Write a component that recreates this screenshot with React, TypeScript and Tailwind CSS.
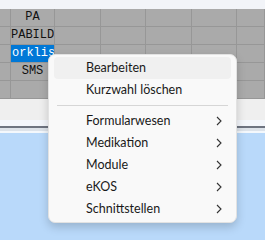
const rows = [
  ["", "PA", "", "", "", "", ""],
  ["", "PABILD", "", "", "", "", ""],
  ["", "orklis", "", "", "", "", ""],
  ["", "SMS", "", "", "", "", ""],
  ["", "", "", "", "", "", ""],
];

const menu = [
  { label: "Bearbeiten", hover: true },
  { label: "Kurzwahl löschen" },
  { sep: true },
  { label: "Formularwesen", sub: true },
  { label: "Medikation", sub: true },
  { label: "Module", sub: true },
  { label: "eKOS", sub: true },
  { label: "Schnittstellen", sub: true },
];

function Chevron() {
  return (
    <svg width="6" height="10" viewBox="0 0 6 10" className="text-[#333]">
      <path d="M1 1 L5 5 L1 9" fill="none" stroke="currentColor" strokeWidth="1.1" />
    </svg>
  );
}

export default function App() {
  return (
    <div className="relative w-[265px] h-[240px] overflow-hidden bg-[#b9d9fa]">
      <div className="h-[9px] bg-[#f2f4f8]" />

      <div className="bg-[#aaaaaa] font-['Liberation_Mono',monospace] text-[12px] text-[#111]">
        {rows.map((row, i) => (
          <div key={i} className="grid grid-cols-[11px_44px_46px_45px_46px_45px_1fr] h-[18px]">
            {row.map((cell, j) => {
              const selected = i === 2 && j === 1;
              return (
                <div
                  key={j}
                  className={`border-r border-b border-[#979797] overflow-hidden whitespace-nowrap leading-[17px] ${
                    selected ? "bg-[#0078d7] text-white pl-[1px]" : "text-center"
                  }`}
                >
                  {cell}
                </div>
              );
            })}
          </div>
        ))}
      </div>

      <div className="h-[21px] bg-[#efefef]" />
      <div className="h-[6px] bg-[#f3f6fb]" />
      <div className="h-[2px] bg-[#6e7480]" />
      <div className="h-[3px] bg-[#dde3ea]" />
      <div className="h-[2px] bg-[#f4f8fc]" />

      <div className="absolute left-[48px] top-[54px] w-[189px] rounded-[7px] border border-[#e2e2e2] bg-[#f9f9f9] px-[5px] pt-[2px] pb-[2px] shadow-[0_4px_10px_rgba(0,0,0,0.18)] font-['Lato',sans-serif] text-[12.5px] text-[#1a1a1a]">
        {menu.map((m, i) =>
          m.sep ? (
            <div key={i} className="py-[4px] px-[3px]">
              <div className="h-px bg-[#d6d6d6]" />
            </div>
          ) : (
            <div
              key={i}
              className={`flex h-[22px] items-center justify-between rounded-[4px] pl-[32px] pr-[9px] ${
                m.hover ? "bg-[#f0f0f0]" : ""
              }`}
            >
              <span>{m.label}</span>
              {m.sub && <Chevron />}
            </div>
          )
        )}
      </div>
    </div>
  );
}
